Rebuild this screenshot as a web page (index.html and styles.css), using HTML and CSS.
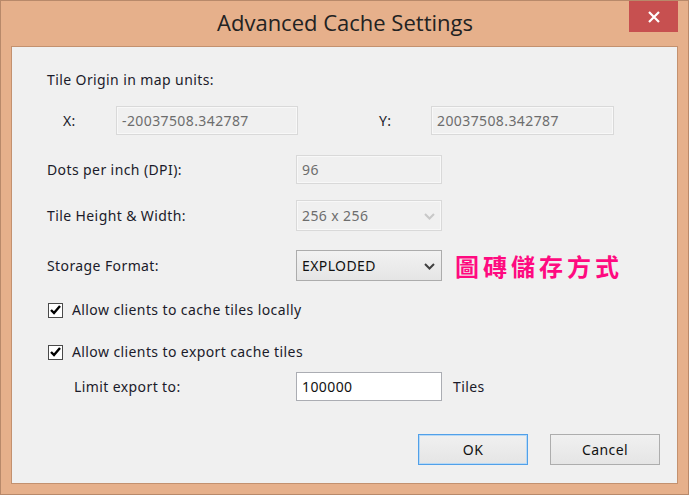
FILE: index.html
```html
<!DOCTYPE html>
<html>
<head>
<meta charset="utf-8">
<link rel="stylesheet" href="styles.css">
</head>
<body>
<div class="window">
  <div class="titlebar">
    <div class="title">Advanced Cache Settings</div>
    <div class="close">
      <svg width="14" height="12" viewBox="0 0 14 12"><path d="M2 1 L12 11 M12 1 L2 11" stroke="#fff" stroke-width="2.2" fill="none"/></svg>
    </div>
  </div>
  <div class="client">
    <div class="row r-title"><span class="lbl">Tile Origin in map units:</span></div>
    <div class="row r-xy">
      <span class="lbl xlbl">X:</span>
      <div class="field disabled xin">-20037508.342787</div>
      <span class="lbl ylbl">Y:</span>
      <div class="field disabled yin">20037508.342787</div>
    </div>
    <div class="row r-dpi">
      <span class="lbl col">Dots per inch (DPI):</span>
      <div class="field disabled w146">96</div>
    </div>
    <div class="row r-tile">
      <span class="lbl col">Tile Height &amp; Width:</span>
      <div class="field disabled select w146">256 x 256
        <svg class="chev" width="11" height="7" viewBox="0 0 11 7"><path d="M1 1 L5.5 5.5 L10 1" stroke="#c8c8c8" stroke-width="2" fill="none"/></svg>
      </div>
    </div>
    <div class="row r-store">
      <span class="lbl col">Storage Format:</span>
      <div class="field combo select w146">EXPLODED
        <svg class="chev" width="11" height="7" viewBox="0 0 11 7"><path d="M1 1 L5.5 5.5 L10 1" stroke="#404040" stroke-width="2" fill="none"/></svg>
      </div>
      <span class="note">圖磚儲存方式</span>
    </div>
    <div class="row r-chk1">
      <span class="box"><svg width="11" height="10" viewBox="0 0 11 10"><path d="M1 5 L4 8 L10 1" stroke="#000" stroke-width="2.4" fill="none"/></svg></span>
      <span class="lbl">Allow clients to cache tiles locally</span>
    </div>
    <div class="row r-chk2">
      <span class="box"><svg width="11" height="10" viewBox="0 0 11 10"><path d="M1 5 L4 8 L10 1" stroke="#000" stroke-width="2.4" fill="none"/></svg></span>
      <span class="lbl">Allow clients to export cache tiles</span>
    </div>
    <div class="row r-limit">
      <span class="lbl col2">Limit export to:</span>
      <div class="field enabled w146">100000</div>
      <span class="lbl tiles">Tiles</span>
    </div>
    <div class="row r-btn">
      <div class="btn default">OK</div>
      <div class="btn">Cancel</div>
    </div>
  </div>
</div>
</body>
</html>
```
FILE: styles.css
```css
html, body {
  margin: 0;
  padding: 0;
  background: #e6b08b;
}
.window {
  width: 689px;
  height: 495px;
  box-sizing: border-box;
  border: 1px solid #b8896a;
  background: #e6b08b;
  font-family: "Noto Sans", "Open Sans", sans-serif;
  font-size: 14px;
  letter-spacing: 0.4px;
  color: #1b1b2a;
}
.titlebar {
  height: 45px;
  position: relative;
  display: flex;
  justify-content: center;
}
.title {
  font-family: "Open Sans", "Noto Sans", sans-serif;
  font-size: 22px;
  letter-spacing: 0;
  color: #222;
  line-height: 22px;
  padding-top: 10px;
  padding-left: 1px;
}
.close {
  position: absolute;
  right: 10px;
  top: 0;
  width: 49px;
  height: 31px;
  background: #c75050;
  display: flex;
  align-items: center;
  justify-content: center;
}
.client {
  margin-left: 10px;
  width: 667px;
  height: 438px;
  box-sizing: border-box;
  border: 1px solid #c3916f;
  background: #f0f0f0;
  padding-left: 35px;
  display: flex;
  flex-direction: column;
}
.row {
  display: flex;
  align-items: center;
  flex: none;
}
.lbl {
  line-height: 16px;
  white-space: nowrap;
}
.r-title { margin-top: 25px; height: 16px; }
.r-xy { margin-top: 18px; height: 29px; }
.xlbl { width: 53px; padding-left: 16px; }
.xin { width: 182px; }
.ylbl { width: 52px; margin-left: 81px; }
.yin { width: 183px; }
.r-dpi { margin-top: 20px; height: 29px; }
.col { width: 249px; }
.col2 { width: 222px; padding-left: 27px; }
.w146 { width: 146px; }
.r-tile { margin-top: 16px; height: 31px; }
.r-store { margin-top: 19px; height: 31px; }
.r-chk1 { margin-top: 21px; height: 16px; }
.r-chk2 { margin-top: 26px; height: 16px; }
.r-limit { margin-top: 12px; height: 29px; }
.r-btn {
  margin-top: 33px;
  height: 31px;
  justify-content: flex-end;
  padding-right: 17px;
  gap: 22px;
}
.field {
  height: 100%;
  box-sizing: border-box;
  display: flex;
  align-items: center;
  padding-left: 5px;
  position: relative;
}
.disabled {
  border: 1px solid #d9d9d9;
  box-shadow: inset 0 0 0 1px #f8f8f8;
  background: #f0f0f0;
  color: #6d6d6d;
}
.enabled {
  border: 1px solid #abadb3;
  background: #fff;
  color: #111;
}
.combo {
  border: 1px solid #acacac;
  background: linear-gradient(#f2f2f2, #e5e5e5);
  color: #111;
}
.chev {
  position: absolute;
  right: 6px;
  top: 50%;
  margin-top: -3px;
}
.note {
  margin-left: 13px;
  font-family: "Noto Sans CJK TC", "Noto Sans CJK SC", sans-serif;
  font-weight: 700;
  font-size: 24px;
  letter-spacing: 4px;
  color: #ff0a80;
  line-height: 28px;
}
.box {
  width: 15px;
  height: 15px;
  box-sizing: border-box;
  border: 1px solid #4a4a4a;
  background: #fff;
  display: flex;
  align-items: center;
  justify-content: center;
  margin-left: 1px;
  margin-right: 9px;
}
.tiles { margin-left: 11px; }
.btn {
  width: 110px;
  height: 31px;
  box-sizing: border-box;
  border: 1px solid #adadad;
  background: linear-gradient(#f0f0f0, #e5e5e5);
  display: flex;
  align-items: center;
  justify-content: center;
  color: #111;
}
.btn.default {
  border-color: #51a0e9;
  box-shadow: inset 0 0 0 1px #b8d9f5;
}
```
